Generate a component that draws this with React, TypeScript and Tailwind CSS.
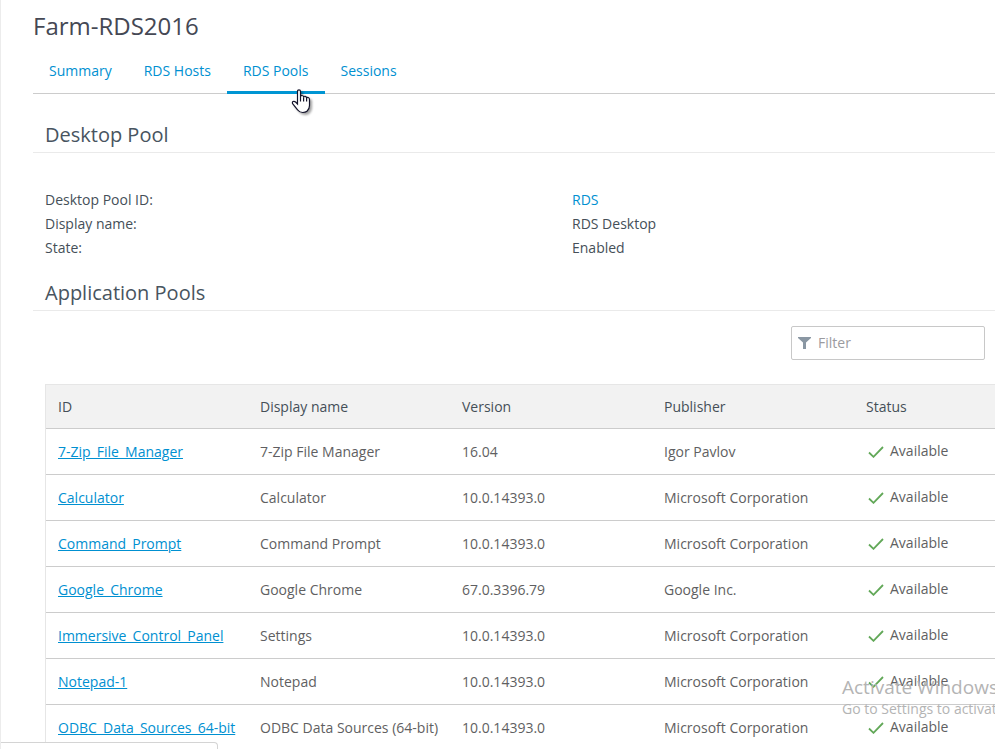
import React from 'react';

interface AppPool {
  id: string;
  name: string;
  version: string;
  publisher: string;
}

const tabs = ['Summary', 'RDS Hosts', 'RDS Pools', 'Sessions'];
const activeTab = 'RDS Pools';

const pools: AppPool[] = [
  { id: '7-Zip_File_Manager', name: '7-Zip File Manager', version: '16.04', publisher: 'Igor Pavlov' },
  { id: 'Calculator', name: 'Calculator', version: '10.0.14393.0', publisher: 'Microsoft Corporation' },
  { id: 'Command_Prompt', name: 'Command Prompt', version: '10.0.14393.0', publisher: 'Microsoft Corporation' },
  { id: 'Google_Chrome', name: 'Google Chrome', version: '67.0.3396.79', publisher: 'Google Inc.' },
  { id: 'Immersive_Control_Panel', name: 'Settings', version: '10.0.14393.0', publisher: 'Microsoft Corporation' },
  { id: 'Notepad-1', name: 'Notepad', version: '10.0.14393.0', publisher: 'Microsoft Corporation' },
  { id: 'ODBC_Data_Sources_64-bit', name: 'ODBC Data Sources (64-bit)', version: '10.0.14393.0', publisher: 'Microsoft Corporation' },
];

const CheckIcon: React.FC = () => (
  <svg width="16" height="14" viewBox="0 0 16 14" fill="none" aria-hidden="true">
    <path d="M1 8.5 L5.5 12.8 L15 3" stroke="#62a858" strokeWidth="1.8" />
  </svg>
);

const FilterIcon: React.FC = () => (
  <svg className="shrink-0" width="13" height="12" viewBox="0 0 13 12" fill="#8a97a3" aria-hidden="true">
    <path d="M0 0 H13 V1 L8 5.5 V12 H5 V5.5 L0 1 Z" />
  </svg>
);

const HandCursor: React.FC = () => (
  <svg
    className="absolute left-[290px] top-[89px] drop-shadow-[2px_2px_1px_rgba(0,0,0,0.35)]"
    width="20"
    height="25"
    viewBox="0 0 20 25"
    aria-hidden="true"
  >
    <path
      d="M6.5 15 V2.5 Q6.5 0.8 8 0.8 Q9.5 0.8 9.5 2.5 V8 Q9.8 6.2 11.2 6.5 Q12.6 6.7 12.6 8.3 Q13 7 14.3 7.3 Q15.6 7.6 15.6 9 Q16.2 8 17.3 8.5 Q18.5 9 18.5 10.5 V16.5 Q18.5 20 16 22.2 Q14.5 23.5 11.8 23.5 Q8.5 23.5 6.8 21 L2 15.2 Q0.8 13.5 2 12.6 Q3.2 11.8 4.6 13 Z"
      fill="#fff"
      stroke="#14142b"
      strokeWidth="1.2"
    />
    <path d="M9.5 8 V12.5 M12.6 8.3 V12.5 M15.6 9 V12.5" stroke="#14142b" strokeWidth="1.2" />
  </svg>
);

const SectionTitle: React.FC<{ children: React.ReactNode }> = ({ children }) => (
  <h2 className="h-9 border-b border-[#eaeaea] pl-3 text-xl leading-9 text-[#485460]">{children}</h2>
);

const App: React.FC = () => {
  return (
    <div className="relative h-screen overflow-hidden border-l border-[#ececec] bg-white pl-8 font-['Open_Sans',sans-serif] text-sm text-[#454f58]">
      <h1 className="pt-2 text-2xl leading-9 text-[#454854]">Farm-RDS2016</h1>

      <nav className="mt-1 flex h-[46px] border-b border-[#cccccc]" role="tablist">
        {tabs.map((tab) => (
          <button
            key={tab}
            type="button"
            role="tab"
            aria-selected={tab === activeTab}
            className={
              tab === activeTab
                ? '-mb-px border-b-3 border-[#0095d3] px-4 pt-0.5 text-[#0090d1]'
                : '-mb-px border-b-3 border-transparent px-4 pt-0.5 text-[#0090d1]'
            }
          >
            {tab}
          </button>
        ))}
      </nav>

      <section className="pt-[23px]">
        <SectionTitle>Desktop Pool</SectionTitle>
        <dl className="grid grid-cols-[527px_1fr] pt-[35px] pl-3 leading-6">
          <dt>Desktop Pool ID:</dt>
          <dd>
            <a href="#rds" className="text-[#0090d1]">RDS</a>
          </dd>
          <dt>Display name:</dt>
          <dd>RDS Desktop</dd>
          <dt>State:</dt>
          <dd>Enabled</dd>
        </dl>
      </section>

      <section className="pt-[15px]">
        <SectionTitle>Application Pools</SectionTitle>

        <div className="flex justify-end pt-[15px] pr-[10px]">
          <label className="flex h-[34px] w-[194px] items-center gap-[7px] rounded-xs border border-[#c8c8c8] px-1.5">
            <FilterIcon />
            <input
              type="text"
              aria-label="Filter"
              placeholder="Filter"
              className="w-full min-w-0 outline-none placeholder:text-[#9b9b9f]"
            />
          </label>
        </div>

        <div className="mt-6 ml-3 border-t border-l border-[#e6e6e6]">
          <table className="w-full table-fixed text-left whitespace-nowrap">
            <thead>
              <tr className="h-[43px] border-b border-[#cccccc] bg-[#f2f2f2]">
                <th className="w-[202px] px-3 pt-0.5 font-normal">ID</th>
                <th className="w-[202px] px-3 pt-0.5 font-normal">Display name</th>
                <th className="w-[202px] px-3 pt-0.5 font-normal">Version</th>
                <th className="w-[202px] px-3 pt-0.5 font-normal">Publisher</th>
                <th className="px-3 pt-0.5 font-normal">Status</th>
              </tr>
            </thead>
            <tbody>
              {pools.map((pool) => (
                <tr key={pool.id} className="h-[46px] border-b border-[#cccccc] text-[#5f5f62]">
                  <td className="px-3 pt-0.5">
                    <a href={`#${pool.id}`} className="text-[#0090d1] underline">{pool.id}</a>
                  </td>
                  <td className="px-3 pt-0.5">{pool.name}</td>
                  <td className="px-3 pt-0.5">{pool.version}</td>
                  <td className="px-3 pt-0.5">{pool.publisher}</td>
                  <td className="px-3">
                    <div className="flex items-center gap-1.5 pl-0.5">
                      <CheckIcon />
                      <span>Available</span>
                    </div>
                  </td>
                </tr>
              ))}
            </tbody>
          </table>
        </div>
      </section>

      <HandCursor />

      {/* System overlay in the lower right corner */}
      <div className="pointer-events-none absolute top-[673px] left-[841px] whitespace-nowrap text-[#b4b4b4]">
        <p className="text-[19px] leading-7">Activate Windows</p>
        <p className="text-sm leading-4">Go to Settings to activate Windows.</p>
      </div>

      {/* Browser link status bubble */}
      <div className="absolute bottom-0 -left-px h-[7px] w-[218px] rounded-tr border-t border-r border-[#d4d4d4] bg-white" />
    </div>
  );
};

export default App;
